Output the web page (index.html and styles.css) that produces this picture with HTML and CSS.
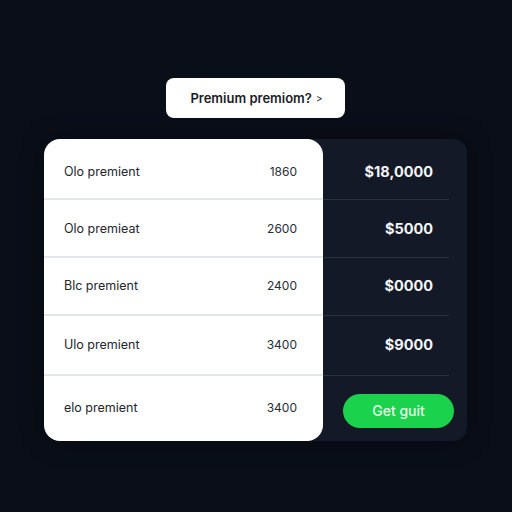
FILE: index.html
```html
<!DOCTYPE html>
<html>
<head>
<meta charset="utf-8">
<link rel="stylesheet" href="styles.css">
</head>
<body>
<div class="page">
  <button class="top-btn">Premium premiom?<span class="chev">&gt;</span></button>
  <div class="panel">
    <div class="card">
      <div class="row r1"><span class="label">Olo premient</span><span class="num">1860</span></div>
      <div class="row r2"><span class="label">Olo premieat</span><span class="num">2600</span></div>
      <div class="row r3"><span class="label">Blc premient</span><span class="num">2400</span></div>
      <div class="row r4"><span class="label">Ulo premient</span><span class="num">3400</span></div>
      <div class="row r5 last"><span class="label">elo premient</span><span class="num">3400</span></div>
    </div>
    <div class="side">
      <div class="srow r1"><span class="price">$18,0000</span></div>
      <div class="srow r2"><span class="price">$5000</span></div>
      <div class="srow r3"><span class="price">$0000</span></div>
      <div class="srow r4"><span class="price">$9000</span></div>
      <div class="srow r5 last"><button class="cta">Get guit</button></div>
    </div>
  </div>
</div>
</body>
</html>
```

FILE: styles.css
```css
html, body {
  margin: 0;
  padding: 0;
  background: #0a0e18;
  width: 512px;
  height: 512px;
  overflow: hidden;
  font-family: Inter, "Liberation Sans", sans-serif;
}
.page {
  display: flex;
  flex-direction: column;
  align-items: flex-start;
  padding-top: 78px;
}
.top-btn {
  align-self: center;
  margin-left: -1px;
  width: 179px;
  height: 40px;
  border: none;
  border-radius: 8px;
  background: #ffffff;
  color: #1a1d24;
  font-family: Inter, "Liberation Sans", sans-serif;
  font-size: 13px;
  font-weight: 600;
  display: flex;
  align-items: center;
  justify-content: center;
  gap: 4px;
  padding: 0 0 0 2px;
}
.chev {
  font-size: 10px;
  font-weight: 500;
  color: #444;
  margin-top: -1px;
}
.panel {
  margin-top: 21px;
  margin-left: 44px;
  width: 423px;
  height: 302px;
  display: flex;
  background: #131927;
  border-radius: 16px 14px 14px 16px;
  box-shadow: 0 0 24px rgba(0, 0, 0, 0.35);
}
.card {
  flex: 0 0 279px;
  width: 279px;
  height: 302px;
  background: #ffffff;
  border-radius: 16px;
  display: flex;
  flex-direction: column;
  overflow: hidden;
}
.r1 { height: 61px; padding-top: 5px; }
.r2 { height: 58px; }
.r3 { height: 58px; padding-bottom: 2px; }
.r4 { height: 60px; padding-bottom: 2px; }
.r5 { flex: 1; padding-bottom: 3px; }
.row {
  display: flex;
  align-items: center;
  justify-content: space-between;
  padding-left: 20px;
  padding-right: 26px;
  border-bottom: 2px solid #e3e6ea;
  box-sizing: border-box;
}
.row.last { border-bottom: none; }
.label {
  font-size: 12.5px;
  color: #23262d;
}
.num {
  font-size: 12px;
  color: #2a2d33;
}
.side {
  flex: 0 0 144px;
  width: 144px;
  min-width: 0;
  display: flex;
  flex-direction: column;
}
.srow {
  display: flex;
  align-items: center;
  justify-content: flex-end;
  margin-right: 18px;
  padding-right: 16px;
  border-bottom: 1px solid #2a3140;
  box-sizing: border-box;
}
.srow.last {
  border-bottom: none;
  justify-content: flex-start;
  margin-right: 0;
  padding: 0 0 8px 20px;
}
.price {
  font-size: 14.5px;
  font-weight: 700;
  color: #f4f6f8;
}
.cta {
  width: 111px;
  height: 34px;
  border: none;
  border-radius: 17px;
  background: #1bd24c;
  color: #e9fbe9;
  font-family: Inter, "Liberation Sans", sans-serif;
  font-size: 14px;
  font-weight: 500;
  padding: 0;
  margin-top: 12px;
}
```
